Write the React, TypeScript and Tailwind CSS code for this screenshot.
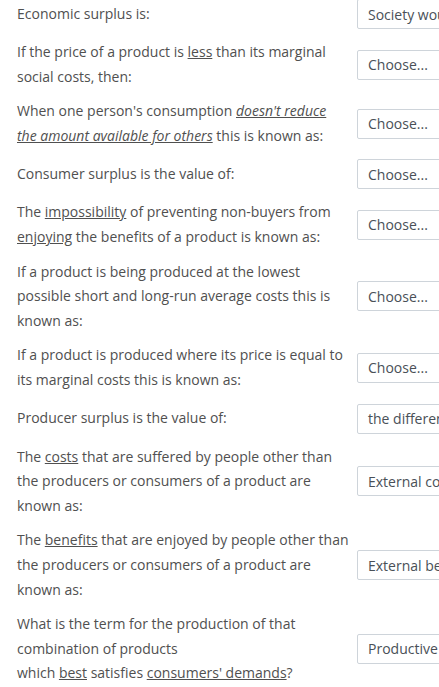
import React from 'react';

type Row = { q: React.ReactNode; a: string };

const U: React.FC<{ children: React.ReactNode; i?: boolean }> = ({ children, i }) => (
  <span className={i ? 'underline italic' : 'underline'}>{children}</span>
);

const rows: Row[] = [
  { q: 'Economic surplus is:', a: 'Society would be better off' },
  { q: <>If the price of a product is <U>less</U> than its marginal social costs, then:</>, a: 'Choose...' },
  {
    q: (
      <>
        When one person's consumption <U i>doesn't reduce</U>
        <br />
        <U i>the amount available for others</U> this is known as:
      </>
    ),
    a: 'Choose...',
  },
  { q: 'Consumer surplus is the value of:', a: 'Choose...' },
  {
    q: (
      <>
        The <U>impossibility</U> of preventing non-buyers from <U>enjoying</U> the benefits of a product is known as:
      </>
    ),
    a: 'Choose...',
  },
  {
    q: 'If a product is being produced at the lowest possible short and long-run average costs this is known as:',
    a: 'Choose...',
  },
  { q: 'If a product is produced where its price is equal to its marginal costs this is known as:', a: 'Choose...' },
  { q: 'Producer surplus is the value of:', a: 'the difference between' },
  {
    q: <>The <U>costs</U> that are suffered by people other than the producers or consumers of a product are known as:</>,
    a: 'External costs',
  },
  {
    q: <>The <U>benefits</U> that are enjoyed by people other than the producers or consumers of a product are known as:</>,
    a: 'External benefits',
  },
  {
    q: (
      <>
        What is the term for the production of that
        <br />
        combination of products
        <br />
        which <U>best</U> satisfies <U>consumers' demands</U>?
      </>
    ),
    a: 'Productive efficiency',
  },
];

export default function App() {
  return (
    <div
      className="w-[439px] h-[687px] overflow-hidden bg-white text-[#505050] text-[14px]"
      style={{ fontFamily: '"Open Sans", "Liberation Sans", sans-serif' }}
    >
      <div className="-mt-[7px]">
        {rows.map((r, i) => (
          <div key={i} className="flex items-center py-[5px]">
            <div className="w-[352px] shrink-0 pl-[17px] leading-[24.6px]">{r.q}</div>
            <div className="ml-[5px] my-[1px] shrink-0 w-[200px] h-[30px] flex items-center border border-[#ced4da] rounded-[2px] pl-[10px] text-[#495057] whitespace-nowrap overflow-hidden">
              {r.a}
            </div>
          </div>
        ))}
      </div>
    </div>
  );
}
